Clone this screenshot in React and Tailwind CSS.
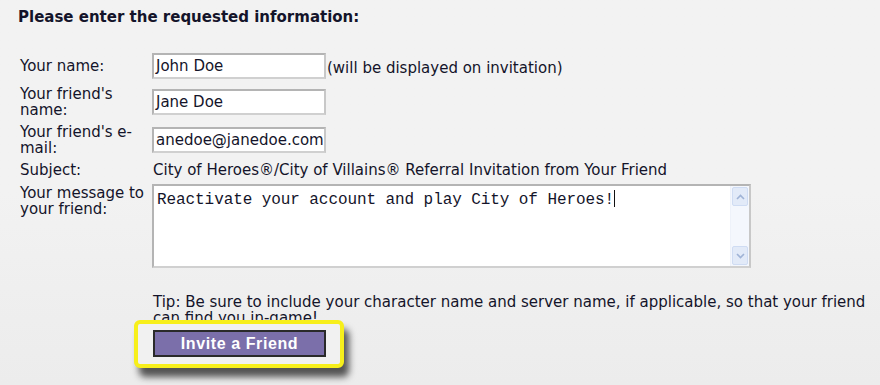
import React from 'react';

const Field = ({ value }) => (
  <div className="w-[174px] h-[26px] bg-white border-2 border-[#b4b4b4] border-r-[#c8c8c8] border-b-[#d0d0d0] flex items-center px-[2px] overflow-hidden whitespace-nowrap">
    {value}
  </div>
);

const Chevron = ({ up }) => (
  <svg width="9" height="6" viewBox="0 0 9 6" fill="none">
    <path
      d={up ? 'M1 5 L4.5 1.5 L8 5' : 'M1 1 L4.5 4.5 L8 1'}
      stroke="#9fb3d6"
      strokeWidth="1.6"
    />
  </svg>
);

const App = () => {
  return (
    <div className="w-[880px] h-[385px] overflow-hidden bg-gradient-to-b from-[#f2f2f2] via-[#f2f2f2] to-[#ececec] text-[#14142a] text-[15px] leading-[16px] font-['DejaVu_Sans','Liberation_Sans',sans-serif]">
      {/* Heading */}
      <h1 className="pl-[18px] pt-[9px] font-bold text-[15px] leading-[16px]">
        Please enter the requested information:
      </h1>

      {/* Form rows */}
      <div className="flex flex-col gap-[6px] pl-[20px] mt-[28px]">
        <div className="flex items-center h-[26px]">
          <div className="w-[132px]">Your name:</div>
          <Field value="John Doe" />
          <span className="ml-[1px] mt-[4px]">(will be displayed on invitation)</span>
        </div>

        <div className="flex items-center h-[32px] mt-[1px]">
          <div className="w-[132px] pr-[2px]">Your friend's name:</div>
          <Field value="Jane Doe" />
        </div>

        <div className="flex items-center h-[32px]">
          <div className="w-[132px] pr-[2px]">Your friend's e-mail:</div>
          <Field value="anedoe@janedoe.com" />
        </div>

        <div className="flex items-center h-[16px]">
          <div className="w-[132px]">Subject:</div>
          <div className="pl-[1px]">City of Heroes®/City of Villains® Referral Invitation from Your Friend</div>
        </div>

        <div className="flex items-start">
          <div className="w-[132px] pt-[1px] pr-[2px]">Your message to your friend:</div>
          <div className="w-[599px] h-[84px] bg-white border-2 border-[#b4b4b4] border-r-[#c8c8c8] border-b-[#d0d0d0] flex">
            <div className="flex-1 pl-[3px] pt-[4px] font-['Liberation_Mono','Courier_New',monospace] text-[16px] leading-[16px] tracking-[-0.08px] whitespace-nowrap">
              Reactivate your account and play City of Heroes!
              <span className="inline-block w-[1px] h-[17px] bg-[#111] align-[-3px]"></span>
            </div>
            <div className="w-[19px] bg-[#f4f7fd] border-l border-[#eef2fa] flex flex-col justify-between p-[1px]">
              <div className="h-[19px] rounded-[2px] bg-[#e2eaf8] border border-[#cfdcf3] flex items-center justify-center">
                <Chevron up />
              </div>
              <div className="h-[19px] rounded-[2px] bg-[#e2eaf8] border border-[#cfdcf3] flex items-center justify-center">
                <Chevron />
              </div>
            </div>
          </div>
        </div>
      </div>

      {/* Tip */}
      <p className="ml-[153px] mt-[26px] w-[722px]">
        Tip: Be sure to include your character name and server name, if applicable, so that your friend can find you in-game!
      </p>

      {/* Highlighted submit button */}
      <div className="relative ml-[134px] -mt-[6px] w-[210px] h-[48px] rounded-[6px] border-[4px] border-[#f7ef1b] bg-[#f1f1f1] shadow-[5px_9px_7px_rgba(0,0,0,0.65)] pl-[15px] pt-[6px]">
        <button className="w-[173px] h-[27px] bg-[#7b6faa] border-2 border-[#2a2a2a] text-white font-bold text-[16px] tracking-[0.6px] font-['Liberation_Sans',Arial,sans-serif] leading-none">
          Invite a Friend
        </button>
      </div>
    </div>
  );
};

export default App;
